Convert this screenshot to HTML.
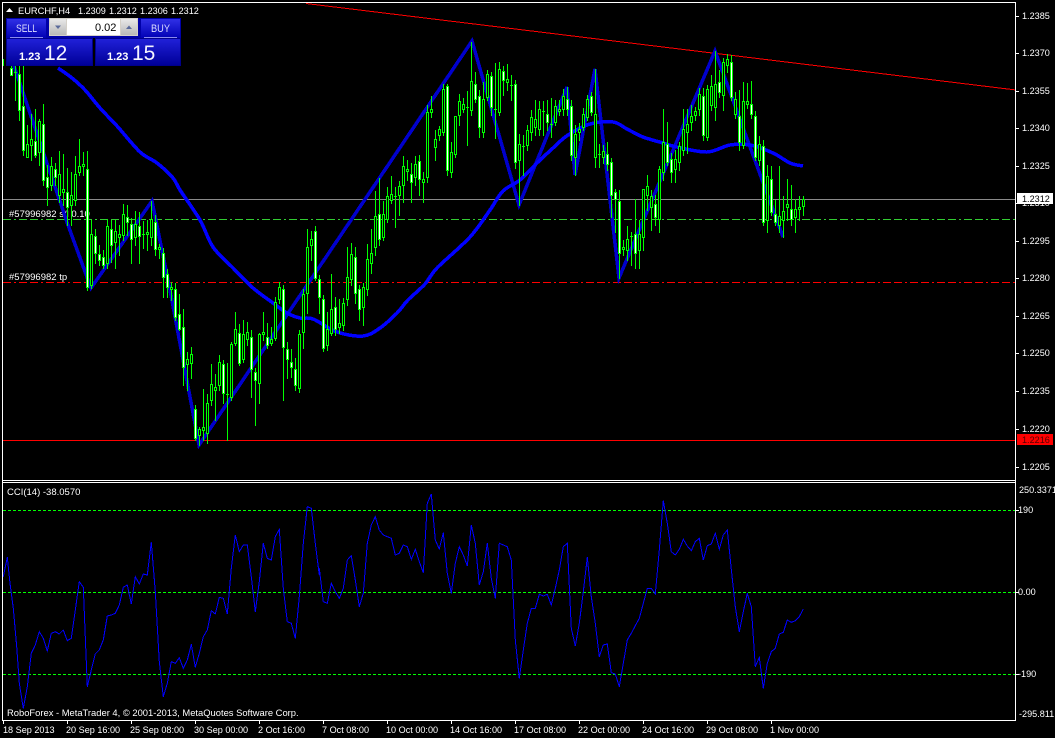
<!DOCTYPE html>
<html><head><meta charset="utf-8"><title>EURCHF,H4</title>
<style>
html,body{margin:0;padding:0;background:#000;width:1055px;height:738px;overflow:hidden}
svg{display:block;position:absolute;left:0;top:0}
text{font-family:"Liberation Sans",sans-serif;font-size:9.1px;fill:#fff}
</style></head><body>
<svg id="s" xmlns="http://www.w3.org/2000/svg" width="1055" height="738" viewBox="0 0 1055 738">
<defs>
<linearGradient id="g1" x1="0" y1="0" x2="0" y2="1"><stop offset="0" stop-color="#3030e6"/><stop offset="1" stop-color="#0000b4"/></linearGradient>
<linearGradient id="g2" x1="0" y1="0" x2="0" y2="1"><stop offset="0" stop-color="#2020d8"/><stop offset="1" stop-color="#000098"/></linearGradient>
<linearGradient id="g3" x1="0" y1="0" x2="0" y2="1"><stop offset="0" stop-color="#e8e8e8"/><stop offset="1" stop-color="#b8b8b8"/></linearGradient>
</defs>
<rect width="1055" height="738" fill="#000"/>
<g shape-rendering="crispEdges">
<path d="M306 3.5L1016 90" stroke="#f00" fill="none"/>
<rect x="3" y="199" width="1012" height="1" fill="#8a8a8a"/>
<path d="M3 219.5H1015" stroke="#32cd32" stroke-dasharray="8 3 2 3 8 3" fill="none"/>
<path d="M3 282.5H1015" stroke="#f00" stroke-dasharray="8 3 2 3 8 3" fill="none"/>
<rect x="3" y="440" width="1012" height="1" fill="#f00"/>
<text x="9" y="217" style="font-size:9.5px">#57996982 s/l 0.10</text>
<text x="9" y="280" style="font-size:9.5px">#57996982 tp</text>
<g id="zz"></g><g id="ma"></g><g id="cd"></g>
<path d="M3 510.5H1015M3 592.5H1015M3 674.5H1015" stroke="#0f0" stroke-dasharray="3 2" fill="none"/>
<g id="cci"></g>
<rect x="2" y="2" width="1014" height="1" fill="#fff"/>
<rect x="2" y="2" width="1" height="719" fill="#fff"/>
<rect x="1015" y="2" width="1" height="719" fill="#fff"/>
<rect x="2" y="480" width="1014" height="1" fill="#fff"/>
<rect x="2" y="482" width="1014" height="1" fill="#fff"/>
<rect x="2" y="720" width="1014" height="1" fill="#fff"/>
<g id="tk"></g>
</g>
<g>
<text x="7" y="495" style="font-size:9.5px">CCI(14) -38.0570</text>
<text x="7" y="716" style="font-size:9.4px">RoboForex - MetaTrader 4, © 2001-2013, MetaQuotes Software Corp.</text>
<text x="1022" y="19">1.2385</text><text x="1022" y="56">1.2370</text><text x="1022" y="94">1.2355</text>
<text x="1022" y="131">1.2340</text><text x="1022" y="169">1.2325</text><text x="1022" y="206">1.2310</text>
<text x="1022" y="244">1.2295</text><text x="1022" y="281">1.2280</text><text x="1022" y="319">1.2265</text>
<text x="1022" y="356">1.2250</text><text x="1022" y="394">1.2235</text><text x="1022" y="432">1.2220</text>
<text x="1022" y="470">1.2205</text>
<rect x="1017" y="193" width="36" height="11" fill="#fff"/><text x="1022" y="202" style="fill:#000">1.2312</text>
<rect x="1017" y="434" width="36" height="11" fill="#f00"/><text x="1022" y="443" style="fill:#500">1.2216</text>
<text x="1019" y="493">250.3371</text><text x="1018" y="513">190</text><text x="1018" y="595">0.00</text>
<text x="1018" y="677">-190</text><text x="1019" y="717">-295.811</text>
<text x="3" y="733">18 Sep 2013</text><text x="66" y="733">20 Sep 16:00</text><text x="130" y="733">25 Sep 08:00</text>
<text x="194" y="733">30 Sep 00:00</text><text x="258" y="733">2 Oct 16:00</text><text x="322" y="733">7 Oct 08:00</text>
<text x="386" y="733">10 Oct 00:00</text><text x="450" y="733">14 Oct 16:00</text><text x="514" y="733">17 Oct 08:00</text>
<text x="578" y="733">22 Oct 00:00</text><text x="642" y="733">24 Oct 16:00</text><text x="706" y="733">29 Oct 08:00</text>
<text x="770" y="733">1 Nov 00:00</text>
<path d="M6 12L9.5 8L13 12Z" fill="#fff"/>
<text x="18" y="14" style="font-size:9.3px">EURCHF,H4</text>
<text x="78" y="14">1.2309</text><text x="109" y="14">1.2312</text><text x="140" y="14">1.2306</text><text x="171" y="14">1.2312</text>
</g>
<g shape-rendering="crispEdges">
<rect x="6" y="18" width="41" height="21" fill="#0000a8"/><rect x="7" y="19" width="39" height="19" fill="url(#g1)"/>
<rect x="140" y="18" width="41" height="21" fill="#0000a8"/><rect x="141" y="19" width="39" height="19" fill="url(#g1)"/>
<rect x="6" y="38" width="87" height="28" fill="#00008c"/><rect x="7" y="39" width="85" height="26" fill="url(#g2)"/>
<rect x="95" y="38" width="86" height="28" fill="#00008c"/><rect x="96" y="39" width="84" height="26" fill="url(#g2)"/>
<rect x="10" y="37" width="33" height="1" fill="#8a8aee"/><rect x="144" y="37" width="33" height="1" fill="#8a8aee"/>
<rect x="47" y="18" width="93" height="20" fill="#0000a8"/>
<rect x="49" y="18" width="89" height="18" fill="#d4d0c8"/>
<rect x="50" y="19" width="16" height="16" fill="url(#g3)"/>
<rect x="67" y="19" width="53" height="16" fill="#fff"/>
<rect x="121" y="19" width="16" height="16" fill="url(#g3)"/>
</g>
<path d="M55 25.5H61L58 29Z" fill="#5a6a9a"/><path d="M126 29H132L129 25.5Z" fill="#5a6a9a"/>
<text x="95" y="31" style="font-size:11px;fill:#000">0.02</text>
<text x="16" y="32" textLength="21" lengthAdjust="spacingAndGlyphs" style="font-size:11px;fill:#dcdcff">SELL</text>
<text x="151" y="32" textLength="19" lengthAdjust="spacingAndGlyphs" style="font-size:11px;fill:#dcdcff">BUY</text>
<text x="19" y="60" style="font-size:11px;font-weight:bold">1.23</text>
<text x="107" y="60" style="font-size:11px;font-weight:bold">1.23</text>
<text x="44" y="60" style="font-size:21px;fill:#f4f4ff">12</text>
<text x="132" y="60" style="font-size:21px;fill:#f4f4ff">15</text>
</svg>
<script>
var NS="http://www.w3.org/2000/svg";
function el(p,n,a){var e=document.createElementNS(NS,n);for(var k in a)e.setAttribute(k,a[k]);document.getElementById(p).appendChild(e);return e}
function rect(p,x,y,w,h,f){el(p,"rect",{x:x,y:y,width:w,height:h,fill:f})}
function smooth(a){var d="M"+a[0]+" "+a[1],n=a.length/2;function X(i){i=Math.max(0,Math.min(n-1,i));return a[2*i]}function Y(i){i=Math.max(0,Math.min(n-1,i));return a[2*i+1]}
 for(var i=0;i<n-1;i++){d+="C"+(X(i)+(X(i+1)-X(i-1))/6).toFixed(1)+" "+(Y(i)+(Y(i+1)-Y(i-1))/6).toFixed(1)+" "+(X(i+1)-(X(i+2)-X(i))/6).toFixed(1)+" "+(Y(i+1)-(Y(i+2)-Y(i))/6).toFixed(1)+" "+X(i+1)+" "+Y(i+1)}return d}
el("zz","polyline",{points:"12,60 68,225 91,288 152,201 170,290 199,445 472,41 519,205 567,87 575,175 595,69 619,278 715,51 783,237",fill:"none",stroke:"#0000cd","stroke-width":3.5});
el("ma","path",{d:smooth([58,68,72,78,85,90,100,108,117,126,140,152,157,163,173,178,180,190,200,220,213,247,233,268,253,288,273,303,287,313,300,318,313,319,337,332,363,336,380,328,397,313,408,300,425,284,437,268,470,237,490,210,503,191,520,180,537,163,553,148,568,135,590,124,613,122,627,129,643,137,663,143,677,147,707,152,730,145,750,145,773,153,790,163,803,166]),fill:"none",stroke:"#00f","stroke-width":3.5});
var c=[[60,75,68,75,1],[66,100,72,72,0],[66,120,74,110,1],[66,155,106,150,1],[125,157,144,157,0],[114,160,139,145,0],[109,157,141,155,1],[119,165,121,152,0],[104,185,124,180,1],[165,205,177,187,1],[157,190,166,185,0],[163,185,169,177,1],[151,202,174,195,0],[154,205,189,192,0],[168,225,192,207,1],[172,225,195,205,0],[156,205,174,200,0],[139,175,166,172,0],[152,175,164,166,0],[151,290,169,287,1],[220,288,234,285,0],[229,263,236,253,1],[245,265,254,260,1],[250,268,257,265,1],[219,268,226,263,0],[220,262,229,245,1],[220,268,231,242,0],[225,255,234,237,0],[204,240,214,235,0],[205,235,217,222,1],[218,263,224,239,1],[211,245,224,237,0],[212,263,226,236,1],[221,248,234,234,0],[220,250,232,234,0],[201,245,219,237,0],[215,255,222,249,1],[244,258,247,249,0],[248,297,253,277,1],[269,297,274,287,1],[282,300,287,289,0],[283,320,289,317,1],[294,330,314,329,1],[309,385,327,367,1],[352,390,359,364,0],[347,378,354,363,0],[405,440,409,438,1],[427,445,429,435,0],[389,440,427,430,0],[394,443,403,433,0],[364,405,384,400,0],[374,420,387,390,0],[355,390,362,385,0],[360,403,364,393,1],[363,440,394,394,0],[342,400,344,397,0],[312,345,329,343,0],[324,365,333,363,1],[320,362,334,359,0],[322,345,332,339,0],[330,397,337,369,1],[368,425,372,380,1],[333,403,334,383,0],[312,340,332,334,0],[323,348,337,345,1],[327,345,339,343,0],[297,340,302,338,0],[282,303,287,299,0],[285,400,289,347,1],[342,378,349,359,1],[349,377,362,367,1],[358,390,369,385,1],[330,392,334,388,0],[289,348,294,332,0],[229,313,247,293,0],[231,260,239,245,0],[226,280,231,278,1],[275,313,279,297,1],[295,351,299,348,1],[312,350,329,345,0],[274,335,309,333,0],[297,335,307,329,1],[299,333,323,327,0],[298,330,303,325,0],[247,305,277,299,0],[243,285,254,279,0],[247,303,257,293,1],[285,320,289,309,1],[283,325,287,307,0],[244,295,259,289,0],[229,273,253,263,0],[191,255,216,247,0],[178,245,214,239,1],[201,240,214,237,0],[187,222,196,219,0],[176,203,194,200,0],[187,227,196,196,0],[181,215,186,195,0],[156,202,166,185,0],[160,180,169,171,0],[163,202,174,182,1],[156,185,164,177,0],[155,195,161,179,1],[172,202,179,182,0],[105,182,112,177,0],[96,117,109,112,0],[130,160,139,147,0],[126,140,129,135,0],[84,135,89,132,0],[84,175,86,170,1],[142,177,152,172,0],[116,157,116,154,0],[94,125,101,115,0],[98,112,104,109,0],[91,145,107,107,0],[42,115,81,110,0],[72,102,84,99,1],[90,137,96,127,1],[82,137,99,132,0],[70,100,74,97,0],[72,115,76,107,1],[63,138,109,109,0],[62,115,69,112,0],[66,95,71,80,1],[64,90,79,82,0],[75,100,85,85,0],[80,168,84,162,1],[134,205,144,160,0],[135,175,146,146,0],[125,150,130,145,0],[110,140,117,132,0],[100,135,119,127,0],[101,135,109,129,0],[101,135,111,111,0],[100,130,114,122,1],[98,137,124,124,0],[100,125,106,122,0],[100,115,109,111,0],[89,115,96,109,0],[87,115,99,109,1],[100,160,106,155,1],[125,175,134,157,0],[123,140,129,132,0],[108,130,114,127,0],[95,120,99,117,0],[92,115,96,112,1],[69,167,114,157,0],[144,167,154,154,0],[145,163,151,157,0],[142,170,154,164,1],[158,217,162,195,1],[189,232,192,199,1],[190,278,201,253,1],[240,255,247,249,0],[226,260,239,250,0],[232,265,236,236,0],[199,268,234,253,1],[220,268,234,250,0],[189,250,189,237,0],[175,210,186,195,0],[190,230,196,207,0],[195,225,204,217,1],[166,232,169,219,0],[109,180,142,172,0],[122,165,144,162,1],[153,182,159,172,1],[150,182,159,169,0],[142,170,146,162,0],[109,155,129,150,0],[109,153,124,132,0],[105,130,116,122,0],[107,120,111,115,0],[88,115,94,109,0],[88,140,96,135,1],[85,140,89,137,0],[75,110,86,105,0],[51,120,84,107,0],[70,97,82,92,1],[58,110,62,95,0],[54,72,59,65,0],[55,100,62,97,1],[92,118,99,114,0],[90,150,116,142,1],[82,148,101,145,0],[83,108,101,104,0],[81,118,104,114,1],[111,160,116,157,1],[136,165,144,160,0],[140,225,146,222,1],[165,232,176,220,0],[166,215,179,212,1],[200,225,214,222,1],[166,232,216,225,0],[196,237,211,220,0],[179,220,204,207,0],[185,225,209,219,1],[199,232,209,217,0],[196,220,207,209,0],[196,215,199,206,0]];
rect("cd",3,59,1,7,"#0f0");
c.forEach(function(d,i){var x=11+i*4,h=d[0],l=d[1],t=d[2],b=d[3],w=d[4];
 rect("cd",x,h,1,l-h+1,"#0f0");
 if(b-t<1){rect("cd",x-1,t,3,1,"#0f0");return}
 rect("cd",x-1,t,3,b-t+1,"#0f0");
 if(b-t>=2)rect("cd",x,t+1,1,b-t-1,w?"#fff":"#000");
});
function pts(a,ox){var o=[];for(var i=0;i<a.length;i+=2)o.push((ox+a[i]/3).toFixed(1)+","+(480+a[i+1]/3).toFixed(1));return o}
var p=pts([10,290,22,232,30,310,40,385,50,500,58,610,70,685,82,620,94,520,106,495,118,455,130,475,142,513,154,460,166,455,178,462,190,450,202,482,214,475,226,390,238,305,250,322,262,620,274,570,286,522,298,510,310,480,322,408,334,405,346,400,358,375,370,322,382,315,394,372,406,290,418,312,430,282,442,285,454,187,466,335,478,545,490,650,502,610,514,545,526,550,538,533,550,565,562,540,574,493,586,562,598,520,610,470,622,450,634,392,646,402,658,352,670,355,682,402,694,265,706,165,718,215,730,195,742,195,754,290,766,395,778,305,790,190,802,235,814,240,826,170,838,148,850,325,862,425,874,430,886,475,898,350,910,190,922,80,934,85,946,190,958,285],0)
.concat(pts([28,265,40,365,52,370,64,310,76,335,88,355,100,325,112,240,124,227,136,300,148,380,160,340,172,190,184,135,196,110,208,150,220,165,232,170,244,175,256,225,268,220,280,195,292,200,304,238,316,208,328,245,340,278,352,70,364,42,376,180,388,207,400,158,412,280,424,340,436,250,448,200,460,225,472,258,484,135,496,190,508,315,520,275,532,190,544,295,556,355,568,190,580,195,592,200,604,240,616,480,628,595,640,510,652,430,664,385,676,385,688,343,700,348,712,343,724,375,736,325,748,270,760,200,772,190,784,445,796,498,808,430,820,335,832,232,844,350,856,430,868,530,880,495,892,492,904,578,916,582,928,620,940,550,952,480],310))
.concat(pts([94,460,106,437,118,415,130,370,142,325,154,325,166,342,178,210,190,62,202,130,214,215,226,225,238,208,250,178,262,198,274,212,286,185,298,175,310,240,322,197,334,192,346,160,358,208,370,165,382,150,394,268,406,380,418,455,430,395,442,340,454,380,466,560,478,532,490,625,502,550,514,515,526,505,538,462,550,457,562,420,574,427,586,422,598,410,610,387],600));
el("cci","polyline",{points:p.join(" "),fill:"none",stroke:"#00f","stroke-width":1});
[16,53,91,128,166,203,241,278,316,353,391,429,467,510,592,674].forEach(function(y){rect("tk",1016,y,3,1,"#fff")});
[3,67,131,195,259,323,387,451,515,579,643,707,771].forEach(function(x){rect("tk",x,721,1,3,"#fff")});
</script>
</body></html>
